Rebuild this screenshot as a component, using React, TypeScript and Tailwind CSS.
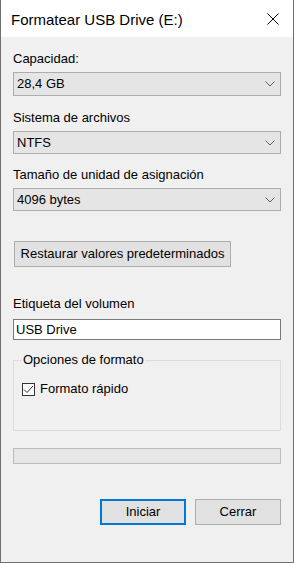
import React from 'react';

function Chevron() {
  return (
    <svg width="10" height="6" viewBox="0 0 10 6" className="shrink-0">
      <path d="M0.5 0.5 L5 5 L9.5 0.5" fill="none" stroke="#606060" strokeWidth="1" />
    </svg>
  );
}

function Combo({ value, tall }: { value: string; tall?: boolean }) {
  return (
    <div
      className={
        'mt-[5px] flex items-center justify-between border border-[#adadad] bg-[#e5e5e5] pl-[3px] pr-[5px] ' +
        (tall ? 'h-[24px]' : 'h-[23px]')
      }
    >
      <span className="leading-[16px]">{value}</span>
      <Chevron />
    </div>
  );
}

function Label({ text, mt }: { text: string; mt: string }) {
  return <div className={'h-[16px] leading-[16px] ' + mt}>{text}</div>;
}

export default function App() {
  return (
    <div className="flex h-[563px] w-[294px] flex-col border-x border-b border-[#707070] bg-[#f0f0f0] font-['Liberation_Sans',Arial,sans-serif] text-[13px] text-black">
      <div className="flex h-[37px] shrink-0 items-start justify-between bg-white pl-[10px] pr-[14px] pt-[10px]">
        <span className="text-[15px] leading-[20px]">Formatear USB Drive (E:)</span>
        <svg width="12" height="12" viewBox="0 0 12 12" className="mt-[3px]">
          <path d="M0.5 0.5 L11.5 11.5 M11.5 0.5 L0.5 11.5" stroke="#000" strokeWidth="1" />
        </svg>
      </div>

      <div className="flex flex-col px-[12px]">
        <Label text="Capacidad:" mt="mt-[14px]" />
        <Combo value="28,4 GB" tall />

        <Label text="Sistema de archivos" mt="mt-[14px]" />
        <Combo value="NTFS" />

        <Label text="Tamaño de unidad de asignación" mt="mt-[13px]" />
        <Combo value="4096 bytes" />

        <button className="ml-[1px] mt-[30px] h-[26px] w-[217px] border border-[#adadad] bg-[#e1e1e1] leading-[16px]">
          Restaurar valores predeterminados
        </button>

        <Label text="Etiqueta del volumen" mt="mt-[29px]" />
        <div className="mt-[7px] flex h-[21px] items-center border border-[#7a7a7a] bg-white pl-[2px]">
          <span className="leading-[16px]">USB Drive</span>
        </div>

        <fieldset className="mt-[12px] h-[79px] border border-[#dcdcdc]">
          <legend className="ml-[8px] px-[1px] leading-[16px]">Opciones de formato</legend>
          <div className="ml-[8px] mt-[13px] flex items-center gap-[5px]">
            <div className="h-[13px] w-[13px] border border-[#333333] bg-white">
              <svg width="11" height="11" viewBox="0 0 11 11" className="block">
                <path d="M1 5.5 L4 8.5 L10 2" fill="none" stroke="#333333" strokeWidth="1" />
              </svg>
            </div>
            <span className="leading-[16px]">Formato rápido</span>
          </div>
        </fieldset>

        <div className="mt-[17px] h-[16px] border border-[#bcbcbc] bg-[#e6e6e6]" />

        <div className="mt-[35px] flex justify-end gap-[9px]">
          <button className="h-[26px] w-[86px] border-2 border-[#0078d7] bg-[#e1e1e1] leading-[16px]">
            Iniciar
          </button>
          <button className="h-[26px] w-[86px] border border-[#adadad] bg-[#e1e1e1] leading-[16px]">
            Cerrar
          </button>
        </div>
      </div>
    </div>
  );
}
